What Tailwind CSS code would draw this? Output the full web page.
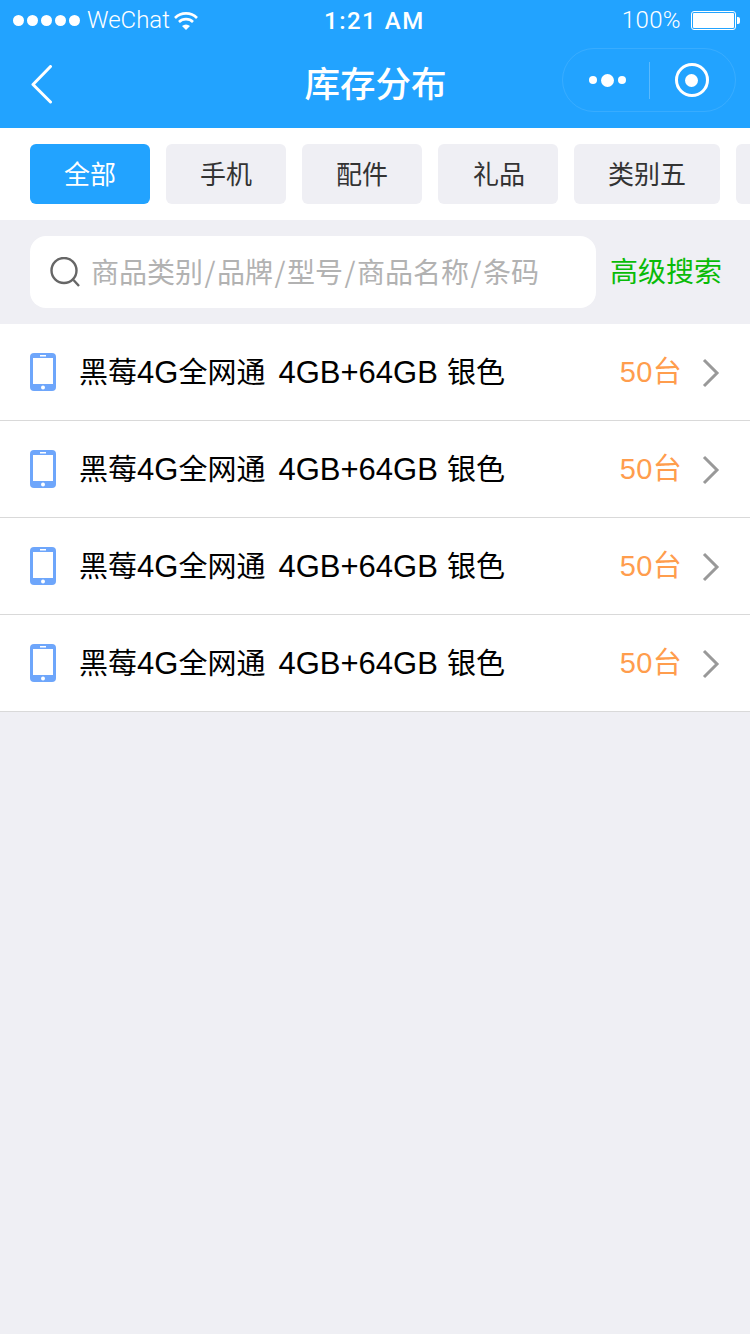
<!DOCTYPE html>
<html lang="zh-CN">

<head>
    <meta charset="UTF-8">
    <meta name="viewport" content="width=device-width, initial-scale=1.0">
    <title>库存分布</title>
    <script src="https://cdn.jsdelivr.net/npm/@tailwindcss/browser@4"></script>
</head>

<body class="bg-[#efeff4] font-['Liberation_Sans','Noto_Sans_CJK_SC',sans-serif]">
    <div class="w-[750px] h-[1334px] overflow-hidden bg-[#efeff4]">
        <!-- status bar -->
        <div class="h-10 bg-[#22a3ff] text-white flex items-center justify-between pl-[13px] pr-[10px] text-[24px] relative font-['Roboto',sans-serif] font-light">
            <div class="flex items-center">
                <div class="flex gap-[3px]">
                    <span class="w-[11px] h-[11px] rounded-full bg-white"></span>
                    <span class="w-[11px] h-[11px] rounded-full bg-white"></span>
                    <span class="w-[11px] h-[11px] rounded-full bg-white"></span>
                    <span class="w-[11px] h-[11px] rounded-full bg-white"></span>
                    <span class="w-[11px] h-[11px] rounded-full bg-white"></span>
                </div>
                <span class="ml-[7px] leading-none">WeChat</span>
                <svg class="ml-1" width="24" height="19" viewBox="0 0 24 19" fill="none">
                    <path d="M1 7 A15.5 15.5 0 0 1 23 7" stroke="white" stroke-width="2.6"/>
                    <path d="M5 11 A10 10 0 0 1 19 11" stroke="white" stroke-width="2.6"/>
                    <path d="M8 15 L12 19 L16 15 A6 6 0 0 0 8 15Z" fill="white"/>
                </svg>
            </div>
            <span class="absolute left-[324px] top-[7px] leading-[28px] font-medium tracking-[1.5px]">1:21 AM</span>
            <div class="flex items-center">
                <span class="leading-none tracking-[0.4px]">100%</span>
                <div class="ml-[10px] w-[45px] h-[19px] border border-white rounded-[3px] p-[1px]">
                    <div class="w-full h-full bg-white rounded-[1px]"></div>
                </div>
                <div class="ml-px w-[3px] h-[7px] bg-white rounded-r-[2px]"></div>
            </div>
        </div>
        <!-- nav bar -->
        <div class="h-[88px] bg-[#22a3ff] relative flex items-center justify-center">
            <svg class="absolute left-[30px] top-[25px]" width="24" height="40" viewBox="0 0 24 40" fill="none">
                <path d="M20.5 1.5 L3 19.5 L20.5 37" stroke="white" stroke-width="3" stroke-linecap="round" stroke-linejoin="round"/>
            </svg>
            <h1 class="text-white text-[35.5px] font-medium leading-[44px] pt-[2px] pl-[1px]">库存分布</h1>
            <div class="absolute left-[562px] top-[8px] w-[174px] h-[64px] rounded-full border border-white/10 flex items-center">
                <div class="w-[86px] h-full flex items-center justify-center gap-1 pl-[3px]">
                    <span class="w-2 h-2 rounded-full bg-white"></span>
                    <span class="w-[13px] h-[13px] rounded-full bg-white"></span>
                    <span class="w-2 h-2 rounded-full bg-white"></span>
                </div>
                <div class="w-px h-[37px] bg-white/25"></div>
                <div class="flex-1 flex items-center justify-center pr-[2px]">
                    <div class="w-[34px] h-[34px] rounded-full border-[3px] border-white flex items-center justify-center">
                        <span class="w-[13px] h-[13px] rounded-full bg-white"></span>
                    </div>
                </div>
            </div>
        </div>
        <!-- category tabs -->
        <div class="h-[92px] bg-white pl-[30px] flex items-start pt-4 gap-4 overflow-hidden text-[26px] text-[#333]">
            <div class="shrink-0 w-[120px] h-[60px] pt-[2px] rounded-[6px] bg-[#22a3ff] text-white flex items-center justify-center">全部</div>
            <div class="shrink-0 w-[120px] h-[60px] pt-[2px] rounded-[6px] bg-[#efeff4] flex items-center justify-center">手机</div>
            <div class="shrink-0 w-[120px] h-[60px] pt-[2px] rounded-[6px] bg-[#efeff4] flex items-center justify-center">配件</div>
            <div class="shrink-0 w-[120px] h-[60px] pt-[2px] pl-[2px] rounded-[6px] bg-[#efeff4] flex items-center justify-center">礼品</div>
            <div class="shrink-0 w-[146px] h-[60px] pt-[2px] rounded-[6px] bg-[#efeff4] flex items-center justify-center">类别五</div>
            <div class="shrink-0 w-[120px] h-[60px] rounded-[6px] bg-[#efeff4]"></div>
        </div>
        <!-- search -->
        <div class="h-[104px] flex items-center pl-[30px]">
            <div class="w-[566px] h-[72px] bg-white rounded-[16px] flex items-center pl-5">
                <svg width="30" height="30" viewBox="0 0 30 30" fill="none">
                    <circle cx="14" cy="13.5" r="12.5" stroke="#666" stroke-width="2.4"/>
                    <path d="M23.5 23 L29 29" stroke="#666" stroke-width="2.4"/>
                </svg>
                <span class="ml-[11px] pb-[2px] text-[28px] text-[#b2b2b2] font-['Noto_Sans_CJK_SC',sans-serif]">商品类别<span class="px-[1.5px]">/</span>品牌<span class="px-[1.5px]">/</span>型号<span class="px-[1.5px]">/</span>商品名称<span class="px-[1.5px]">/</span>条码</span>
            </div>
            <span class="ml-[14px] pt-[2px] text-[28px] text-[#09bb07]">高级搜索</span>
        </div>
        <!-- list -->
        <div class="bg-white">
            <div class="h-[97px] border-b border-[#d9d9d9] flex items-center pl-[30px] pr-[30px]">
                <svg width="26" height="38" viewBox="0 0 26 38" fill="none">
                    <rect width="26" height="38" rx="4" fill="#6ea6fb"/>
                    <rect x="3" y="5" width="20" height="26" fill="white"/>
                    <rect x="10" y="2" width="6" height="1.5" fill="white"/>
                    <circle cx="13" cy="34.5" r="2" fill="white"/>
                </svg>
                <span class="ml-[23px] pt-[2px] text-[29px] leading-[40px] text-black">黑莓<span class="text-[31px]">4G</span>全网通 <span class="text-[31px] ml-[5px]">4GB+64GB</span> <span class="ml-px">银色</span></span>
                <span class="ml-auto pt-[2px] text-[29px] text-[#ff9d4d] tracking-[0.3px]">50台</span>
                <svg class="ml-5 mt-[2px]" width="18" height="30" viewBox="0 0 18 30" fill="none">
                    <path d="M2 2 L15 15 L2 28" stroke="#999" stroke-width="3"/>
                </svg>
            </div>
            <div class="h-[97px] border-b border-[#d9d9d9] flex items-center pl-[30px] pr-[30px]">
                <svg width="26" height="38" viewBox="0 0 26 38" fill="none">
                    <rect width="26" height="38" rx="4" fill="#6ea6fb"/>
                    <rect x="3" y="5" width="20" height="26" fill="white"/>
                    <rect x="10" y="2" width="6" height="1.5" fill="white"/>
                    <circle cx="13" cy="34.5" r="2" fill="white"/>
                </svg>
                <span class="ml-[23px] pt-[2px] text-[29px] leading-[40px] text-black">黑莓<span class="text-[31px]">4G</span>全网通 <span class="text-[31px] ml-[5px]">4GB+64GB</span> <span class="ml-px">银色</span></span>
                <span class="ml-auto pt-[2px] text-[29px] text-[#ff9d4d] tracking-[0.3px]">50台</span>
                <svg class="ml-5 mt-[2px]" width="18" height="30" viewBox="0 0 18 30" fill="none">
                    <path d="M2 2 L15 15 L2 28" stroke="#999" stroke-width="3"/>
                </svg>
            </div>
            <div class="h-[97px] border-b border-[#d9d9d9] flex items-center pl-[30px] pr-[30px]">
                <svg width="26" height="38" viewBox="0 0 26 38" fill="none">
                    <rect width="26" height="38" rx="4" fill="#6ea6fb"/>
                    <rect x="3" y="5" width="20" height="26" fill="white"/>
                    <rect x="10" y="2" width="6" height="1.5" fill="white"/>
                    <circle cx="13" cy="34.5" r="2" fill="white"/>
                </svg>
                <span class="ml-[23px] pt-[2px] text-[29px] leading-[40px] text-black">黑莓<span class="text-[31px]">4G</span>全网通 <span class="text-[31px] ml-[5px]">4GB+64GB</span> <span class="ml-px">银色</span></span>
                <span class="ml-auto pt-[2px] text-[29px] text-[#ff9d4d] tracking-[0.3px]">50台</span>
                <svg class="ml-5 mt-[2px]" width="18" height="30" viewBox="0 0 18 30" fill="none">
                    <path d="M2 2 L15 15 L2 28" stroke="#999" stroke-width="3"/>
                </svg>
            </div>
            <div class="h-[97px] border-b border-[#d9d9d9] flex items-center pl-[30px] pr-[30px]">
                <svg width="26" height="38" viewBox="0 0 26 38" fill="none">
                    <rect width="26" height="38" rx="4" fill="#6ea6fb"/>
                    <rect x="3" y="5" width="20" height="26" fill="white"/>
                    <rect x="10" y="2" width="6" height="1.5" fill="white"/>
                    <circle cx="13" cy="34.5" r="2" fill="white"/>
                </svg>
                <span class="ml-[23px] pt-[2px] text-[29px] leading-[40px] text-black">黑莓<span class="text-[31px]">4G</span>全网通 <span class="text-[31px] ml-[5px]">4GB+64GB</span> <span class="ml-px">银色</span></span>
                <span class="ml-auto pt-[2px] text-[29px] text-[#ff9d4d] tracking-[0.3px]">50台</span>
                <svg class="ml-5 mt-[2px]" width="18" height="30" viewBox="0 0 18 30" fill="none">
                    <path d="M2 2 L15 15 L2 28" stroke="#999" stroke-width="3"/>
                </svg>
            </div>
        </div>
    </div>
</body>

</html>
